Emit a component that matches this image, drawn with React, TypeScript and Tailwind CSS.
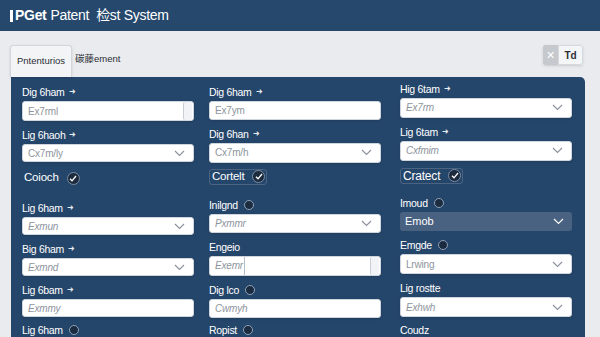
import React from "react";

const font = { fontFamily: '"Liberation Sans", Arial, "Noto Sans CJK SC", sans-serif' };

function Chevron({ light = false }: { light?: boolean }) {
  return (
    <svg width="11" height="7" viewBox="0 0 11 7" className="shrink-0">
      <path d="M1 1 L5.5 5.5 L10 1" fill="none" stroke={light ? "#ffffff" : "#8a919c"} strokeWidth="1.1" />
    </svg>
  );
}

function Label({ text, mark }: { text: string; mark?: "arrow" | "radio" }) {
  return (
    <div className="flex h-[14px] items-center gap-[4px] text-[10.5px] leading-[14px] tracking-[-0.3px] text-white">
      <span>{text}</span>
      {mark === "arrow" && <span className="text-[8px] text-[#e8edf3]">➜</span>}
      {mark === "radio" && (
        <span className="ml-[2px] inline-block h-[10px] w-[10px] rounded-full border border-[#8fa0b5] bg-[#1b2c40]" />
      )}
    </div>
  );
}

type Kind = "input" | "select" | "scroll" | "split" | "dark";

function Field({ kind, ph, italic = false }: { kind: Kind; ph: string; italic?: boolean }) {
  if (kind === "dark") {
    return (
      <div className="mt-[2px] flex h-[20px] items-center justify-between rounded-[3px] bg-[#4a6282] pl-[5px] pr-[8px] text-[11px] text-white">
        <span>{ph}</span>
        <Chevron light />
      </div>
    );
  }
  return (
    <div className="mt-[2px] flex h-[20px] items-center justify-between rounded-[3px] border border-[#cfd5dd] bg-white pl-[5px] pr-[8px] shadow-sm">
      <div className="flex h-full items-center">
        <span className={`text-[10px] tracking-[-0.2px] text-[#8e949d] ${italic ? "italic" : ""}`}>{ph}</span>
        {kind === "split" && <span className="ml-[1px] h-full w-px bg-[#b8bec7]" />}
      </div>
      {kind === "select" && <Chevron />}
      {(kind === "scroll" || kind === "split") && (
        <span className="-mr-[7px] h-[18px] w-[9px] rounded-[2px] border-l border-[#c9ced6] bg-[#f1f3f6]" />
      )}
    </div>
  );
}

function Check({ text, boxed = false, big = false }: { text: string; boxed?: boolean; big?: boolean }) {
  return (
    <div
      className={`flex h-[16px] items-center gap-[8px] self-start rounded-[3px] pl-[2px] pr-[1px] tracking-[-0.2px] ${
        boxed ? "border border-[#4c6482]" : ""
      } ${big ? "text-[12px]" : "text-[11.5px]"} text-white`}
    >
      <span>{text}</span>
      <span className="flex h-[13px] w-[13px] items-center justify-center rounded-full border border-[#7a8ca3] bg-[#1c2b3d]">
        <svg width="8" height="7" viewBox="0 0 8 7">
          <path d="M1 3.8 L3 5.8 L7 1" fill="none" stroke="#fff" strokeWidth="1.3" />
        </svg>
      </span>
    </div>
  );
}

export default function App() {
  return (
    <div style={font} className="h-[337px] w-[600px] overflow-hidden bg-[#e9ebee]">
      <div className="flex h-[31px] items-center bg-[#26486d] pl-[10px] text-[14px] tracking-[-0.3px] text-white">
        <span className="mr-[2px] inline-block h-[12px] w-[3px] bg-white" />
        <span className="font-bold">PGet</span>
        <span className="ml-[4px]">Patent</span>
        <span className="ml-[7px]">检st System</span>
      </div>

      <div className="flex h-[46px] items-end justify-between pl-[10px] pr-[17px]">
        <div className="flex items-center">
          <div className="flex h-[32px] w-[62px] items-center justify-center rounded-t-[3px] border border-b-0 border-[#d3d6db] bg-[#f3f4f6] text-[9.5px] text-[#2b2f36] shadow-sm">
            Pntenturios
          </div>
          <span className="ml-[3px] -mt-[4px] text-[9.5px] text-[#2b2f36]">碳藤ement</span>
        </div>
        <div className="mb-[12px] flex h-[20px] shadow-sm">
          <div className="flex w-[15px] items-center justify-center rounded-l-[2px] bg-[#c5c8cd] text-[11px] text-white">✕</div>
          <div className="flex w-[25px] items-center justify-center rounded-r-[3px] border border-[#d6d9de] bg-[#f4f5f7] text-[10px] font-bold text-[#2b2f36]">
            Td
          </div>
        </div>
      </div>

      <div className="ml-[11px] flex h-[260px] w-[574px] gap-[15px] rounded-tr-[5px] bg-[#25466b] pl-[11px]">
        <div className="flex w-[172px] flex-col pt-[8px]">
          <Label text="Dig 6ham" mark="arrow" />
          <Field kind="scroll" ph="Ex7rml" />
          <div className="mt-[7px]" />
          <Label text="Lig 6haoh" mark="arrow" />
          <Field kind="select" ph="Cx7m/ly" />
          <div className="mt-[8px]" />
          <Check text="Coioch" />
          <div className="mt-[15px]" />
          <Label text="Lig 6ham" mark="arrow" />
          <Field kind="select" ph="Exmun" italic />
          <div className="mt-[7px]" />
          <Label text="Big 6ham" mark="arrow" />
          <Field kind="select" ph="Exmnd" italic />
          <div className="mt-[7px]" />
          <Label text="Lig 6bam" mark="arrow" />
          <Field kind="input" ph="Exmmy" italic />
          <div className="mt-[6px]" />
          <Label text="Lig 6ham" mark="radio" />
        </div>

        <div className="flex w-[172px] flex-col pt-[8px]">
          <Label text="Dig 6ham" mark="arrow" />
          <Field kind="input" ph="Ex7ym" />
          <div className="mt-[7px]" />
          <Label text="Dig 6han" mark="arrow" />
          <Field kind="select" ph="Cx7m/h" />
          <div className="mt-[6px]" />
          <Check text="Cortelt" boxed />
          <div className="mt-[13px]" />
          <Label text="Inilgnd" mark="radio" />
          <Field kind="select" ph="Pxmmr" italic />
          <div className="mt-[7px]" />
          <Label text="Engeio" />
          <Field kind="split" ph="Exemr" italic />
          <div className="mt-[7px]" />
          <Label text="Dig lco" mark="radio" />
          <Field kind="input" ph="Cwmyh" italic />
          <div className="mt-[5px]" />
          <Label text="Ropist" mark="radio" />
        </div>

        <div className="ml-[4px] flex w-[172px] flex-col pt-[5px]">
          <Label text="Hig 6tam" mark="arrow" />
          <Field kind="select" ph="Ex7rm" italic />
          <div className="mt-[7px]" />
          <Label text="Lig 6tam" mark="arrow" />
          <Field kind="select" ph="Cxfmim" italic />
          <div className="mt-[7px]" />
          <Check text="Cratect" boxed big />
          <div className="mt-[12px]" />
          <Label text="Imoud" mark="radio" />
          <Field kind="dark" ph="Emob" />
          <div className="mt-[7px]" />
          <Label text="Emgde" mark="radio" />
          <Field kind="select" ph="Lrwing" />
          <div className="mt-[7px]" />
          <Label text="Lig rostte" />
          <Field kind="select" ph="Exhwh" italic />
          <div className="mt-[6px]" />
          <Label text="Coudz" />
        </div>
      </div>
    </div>
  );
}
